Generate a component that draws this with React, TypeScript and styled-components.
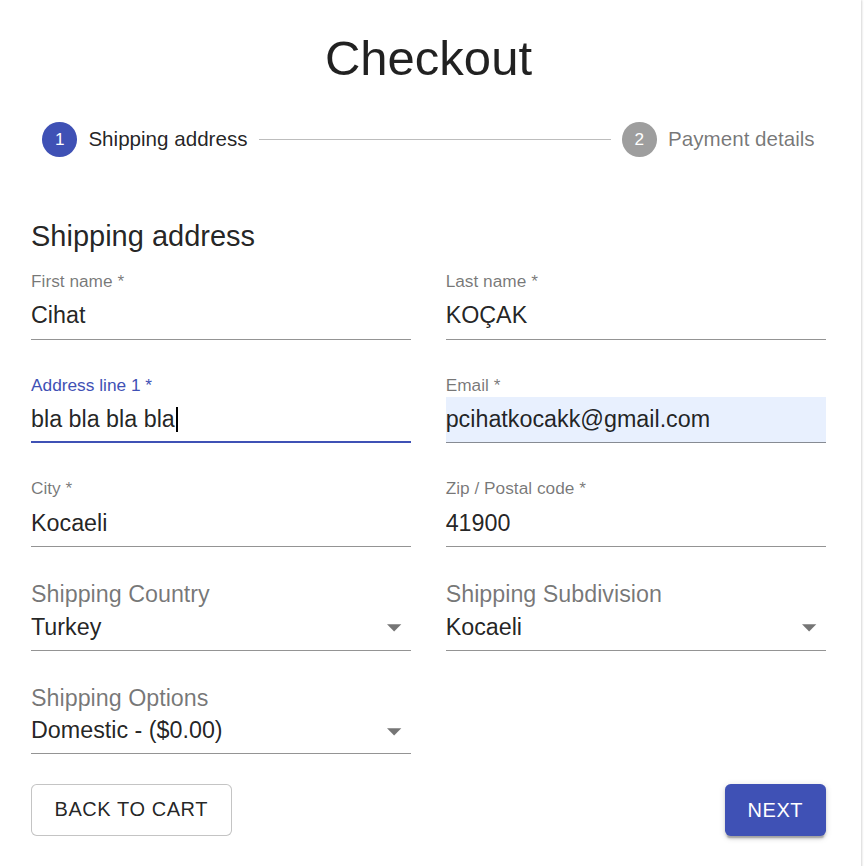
import React from "react";
import styled, { createGlobalStyle } from "styled-components";

const GlobalStyle = createGlobalStyle`
  html, body {
    margin: 0;
    padding: 0;
    background: #ffffff;
    overflow: hidden;
  }
  body {
    font-family: "Liberation Sans", Arial, sans-serif;
    color: rgba(0, 0, 0, 0.87);
  }
`;

const PRIMARY = "#3f51b5";

const Paper = styled.main`
  box-sizing: border-box;
  width: 861px;
  min-height: 866px;
  padding: 28px 35px 40px 31px;
  background: #fff;
  box-shadow: 1px 0 2px rgba(0, 0, 0, 0.16);
`;

const Title = styled.h1`
  margin: 0;
  font-size: 49px;
  line-height: 60px;
  font-weight: 400;
  text-align: center;
  color: rgba(0, 0, 0, 0.87);
`;

const Stepper = styled.div`
  display: flex;
  align-items: center;
  padding: 34.3px 0 57.2px;
`;

const Step = styled.div`
  display: flex;
  align-items: center;
  padding: 0 11.4px;
`;

const StepIcon = styled.div<{ $active?: boolean }>`
  width: 34.6px;
  height: 34.6px;
  border-radius: 50%;
  background: ${(p) => (p.$active ? PRIMARY : "#9e9e9e")};
  color: #fff;
  font-size: 17.2px;
  display: flex;
  align-items: center;
  justify-content: center;
  flex-shrink: 0;
`;

const StepLabel = styled.span<{ $active?: boolean }>`
  padding-left: 11.4px;
  font-size: 20.6px;
  line-height: 28.6px;
  color: ${(p) => (p.$active ? "rgba(0,0,0,0.87)" : "rgba(0,0,0,0.54)")};
  white-space: nowrap;
`;

const Connector = styled.div`
  flex: 1 1 auto;
  border-top: 1px solid #bdbdbd;
`;

const SectionTitle = styled.h2`
  margin: 0 0 10px;
  font-size: 29px;
  line-height: 45.8px;
  font-weight: 400;
`;

const FormGrid = styled.div`
  display: grid;
  grid-template-columns: 1fr 1fr;
  column-gap: 34.3px;
  row-gap: 35.05px;
  padding-top: 1px;
`;

const Field = styled.div`
  display: flex;
  flex-direction: column;
  min-width: 0;
`;

const FieldLabel = styled.label<{ $focused?: boolean; $large?: boolean }>`
  display: block;
  height: 22.9px;
  font-size: ${(p) => (p.$large ? "23.3px" : "17.3px")};
  line-height: ${(p) => (p.$large ? "24px" : "21.5px")};
  color: ${(p) => (p.$focused ? PRIMARY : "rgba(0,0,0,0.54)")};
  white-space: nowrap;
`;

const InputBox = styled.div<{ $focused?: boolean; $autofill?: boolean }>`
  display: flex;
  align-items: center;
  justify-content: space-between;
  height: 27.2px;
  padding: 8.6px 0 10px;
  background: ${(p) => (p.$autofill ? "#e8f0fe" : "transparent")};
  box-shadow: ${(p) =>
    p.$focused
      ? `inset 0 -2px 0 ${PRIMARY}`
      : "inset 0 -1px 0 rgba(0,0,0,0.42)"};
`;

const InputText = styled.span`
  font-size: 23.3px;
  line-height: 27px;
  color: rgba(0, 0, 0, 0.87);
  white-space: nowrap;
`;

const Caret = styled.span`
  display: inline-block;
  width: 2px;
  height: 25px;
  margin-left: 1px;
  background: #000;
  vertical-align: -5px;
`;

const ArrowIcon = styled.svg`
  width: 34.3px;
  height: 34.3px;
  flex-shrink: 0;
  fill: rgba(0, 0, 0, 0.54);
`;

const Actions = styled.div`
  display: flex;
  justify-content: space-between;
  align-items: center;
  margin-top: 29.5px;
`;

const ButtonBase = styled.button`
  font-family: "Liberation Sans", Arial, sans-serif;
  font-size: 20px;
  line-height: 35px;
  letter-spacing: 0.57px;
  text-transform: uppercase;
  border-radius: 5.7px;
  cursor: pointer;
  box-sizing: border-box;
  height: 52px;
`;

const OutlinedButton = styled(ButtonBase)`
  padding: 7.15px 22.5px;
  border: 1px solid rgba(0, 0, 0, 0.23);
  background: #fff;
  color: rgba(0, 0, 0, 0.87);
`;

const ContainedButton = styled(ButtonBase)`
  padding: 8.6px 22.9px;
  border: none;
  background: ${PRIMARY};
  color: #fff;
  box-shadow: 0 4.3px 1.4px -2.9px rgba(0, 0, 0, 0.2),
    0 2.9px 2.9px 0 rgba(0, 0, 0, 0.14), 0 1.4px 7px 0 rgba(0, 0, 0, 0.12);
`;

type TextFieldProps = {
  label: string;
  value: string;
  focused?: boolean;
  autofill?: boolean;
};

const TextField = ({ label, value, focused, autofill }: TextFieldProps) => (
  <Field>
    <FieldLabel $focused={focused}>{label} *</FieldLabel>
    <InputBox $focused={focused} $autofill={autofill}>
      <InputText>
        {value}
        {focused && <Caret />}
      </InputText>
    </InputBox>
  </Field>
);

const SelectField = ({ label, value }: { label: string; value: string }) => (
  <Field>
    <FieldLabel $large>{label}</FieldLabel>
    <InputBox>
      <InputText>{value}</InputText>
      <ArrowIcon viewBox="0 0 24 24" aria-hidden="true">
        <path d="M7 10l5 5 5-5z" />
      </ArrowIcon>
    </InputBox>
  </Field>
);

export default function App() {
  return (
    <>
      <GlobalStyle />
      <Paper>
        <Title>Checkout</Title>
        <Stepper>
          <Step>
            <StepIcon $active>1</StepIcon>
            <StepLabel $active>Shipping address</StepLabel>
          </Step>
          <Connector />
          <Step>
            <StepIcon>2</StepIcon>
            <StepLabel>Payment details</StepLabel>
          </Step>
        </Stepper>
        <SectionTitle>Shipping address</SectionTitle>
        <FormGrid>
          <TextField label="First name" value="Cihat" />
          <TextField label="Last name" value="KOÇAK" />
          <TextField label="Address line 1" value="bla bla bla bla" focused />
          <TextField label="Email" value="pcihatkocakk@gmail.com" autofill />
          <TextField label="City" value="Kocaeli" />
          <TextField label="Zip / Postal code" value="41900" />
          <SelectField label="Shipping Country" value="Turkey" />
          <SelectField label="Shipping Subdivision" value="Kocaeli" />
          <SelectField label="Shipping Options" value="Domestic - ($0.00)" />
        </FormGrid>
        <Actions>
          <OutlinedButton type="button">Back to cart</OutlinedButton>
          <ContainedButton type="button">Next</ContainedButton>
        </Actions>
      </Paper>
    </>
  );
}
